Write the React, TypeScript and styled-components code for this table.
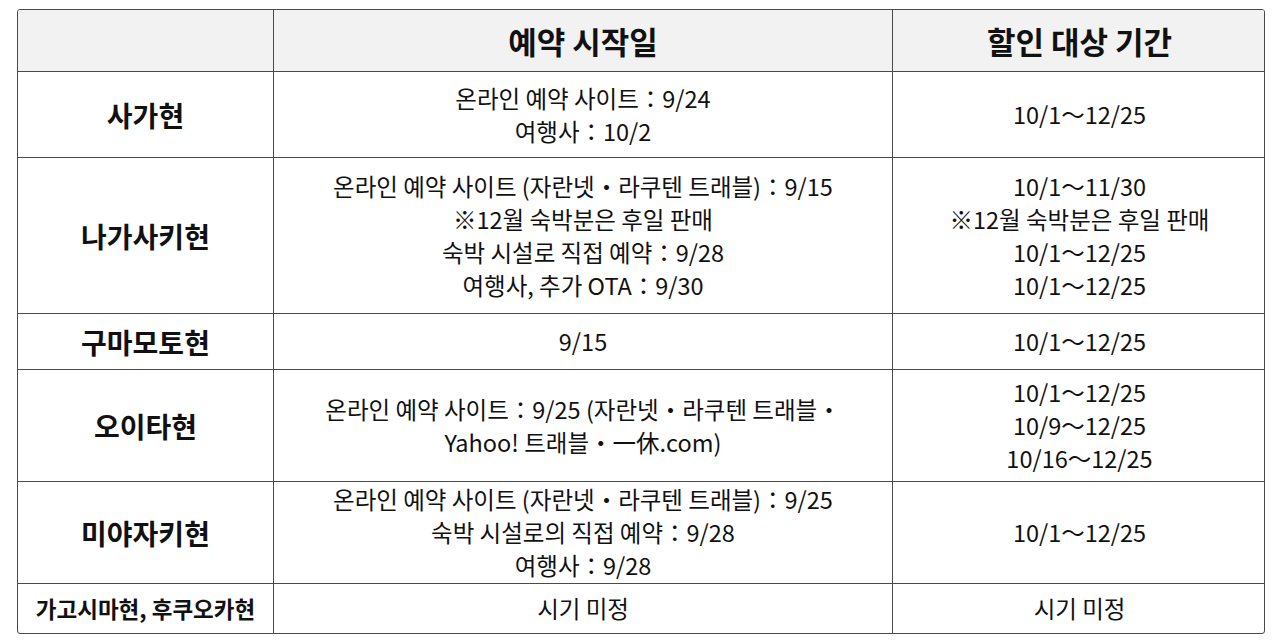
import styled, { createGlobalStyle } from 'styled-components';

const GlobalStyle = createGlobalStyle`
  body {
    margin: 0;
    background: #ffffff;
    font-family: 'Noto Sans CJK KR', 'Noto Sans', sans-serif;
    color: #111111;
  }
`;

type Row = {
  name: string;
  small?: boolean;
  height: number;
  start: string[];
  period: string[];
};

const rows: Row[] = [
  {
    name: '사가현',
    height: 86,
    start: ['온라인 예약 사이트：9/24', '여행사：10/2'],
    period: ['10/1～12/25'],
  },
  {
    name: '나가사키현',
    height: 156,
    start: [
      '온라인 예약 사이트 (자란넷・라쿠텐 트래블)：9/15',
      '※12월 숙박분은 후일 판매',
      '숙박 시설로 직접 예약：9/28',
      '여행사, 추가 OTA：9/30',
    ],
    period: ['10/1～11/30', '※12월 숙박분은 후일 판매', '10/1～12/25', '10/1～12/25'],
  },
  {
    name: '구마모토현',
    height: 56,
    start: ['9/15'],
    period: ['10/1～12/25'],
  },
  {
    name: '오이타현',
    height: 112,
    start: ['온라인 예약 사이트：9/25 (자란넷・라쿠텐 트래블・', 'Yahoo! 트래블・一休.com)'],
    period: ['10/1～12/25', '10/9～12/25', '10/16～12/25'],
  },
  {
    name: '미야자키현',
    height: 102,
    start: ['온라인 예약 사이트 (자란넷・라쿠텐 트래블)：9/25', '숙박 시설로의 직접 예약：9/28', '여행사：9/28'],
    period: ['10/1～12/25'],
  },
  {
    name: '가고시마현, 후쿠오카현',
    small: true,
    height: 49,
    start: ['시기 미정'],
    period: ['시기 미정'],
  },
];

const Page = styled.div`
  padding: 9px 0 0 17px;
`;

const Frame = styled.div`
  width: 1246px;
  border: 1.5px solid #4a4a4a;
  border-radius: 3px;
  overflow: hidden;
`;

const Table = styled.table`
  width: 100%;
  border-collapse: collapse;
  table-layout: fixed;
`;

const HeadCell = styled.th<{ $w: number }>`
  width: ${(p) => p.$w}px;
  height: 61px;
  background: #f2f2f2;
  font-size: 31px;
  font-weight: 700;
  text-align: center;
  padding: 0;
  border-left: 1.5px solid #4a4a4a;
  &:first-child {
    border-left: none;
  }
`;

const BodyRow = styled.tr<{ $h: number }>`
  height: ${(p) => p.$h}px;
  border-top: 1.5px solid #4a4a4a;
`;

const NameCell = styled.td<{ $small?: boolean }>`
  font-size: ${(p) => (p.$small ? 22.5 : 28)}px;
  font-weight: 700;
  text-align: center;
  padding: 0;
`;

const TextCell = styled.td`
  font-size: 23.5px;
  line-height: 33px;
  text-align: center;
  padding: 0;
  border-left: 1.5px solid #4a4a4a;
`;

const Line = styled.div`
  white-space: nowrap;
`;

export default function App() {
  return (
    <Page>
      <GlobalStyle />
      <Frame>
        <Table>
          <thead>
            <tr>
              <HeadCell $w={255} />
              <HeadCell $w={618}>예약 시작일</HeadCell>
              <HeadCell $w={373}>할인 대상 기간</HeadCell>
            </tr>
          </thead>
          <tbody>
            {rows.map((r) => (
              <BodyRow key={r.name} $h={r.height}>
                <NameCell $small={r.small}>{r.name}</NameCell>
                <TextCell>
                  {r.start.map((t) => (
                    <Line key={t}>{t}</Line>
                  ))}
                </TextCell>
                <TextCell>
                  {r.period.map((t, i) => (
                    <Line key={i}>{t}</Line>
                  ))}
                </TextCell>
              </BodyRow>
            ))}
          </tbody>
        </Table>
      </Frame>
    </Page>
  );
}
